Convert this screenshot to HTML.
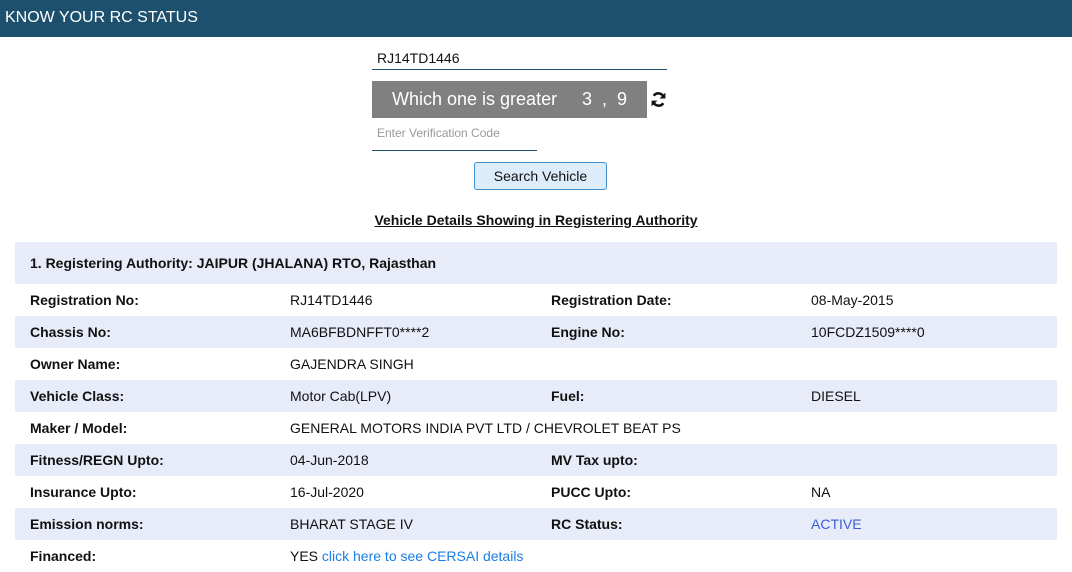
<!DOCTYPE html>
<html><head><style>
body{margin:0;width:1072px;height:571px;overflow:hidden;background:#fff;font-family:"Liberation Sans",Arial,sans-serif;color:#111;}
.hdr{position:absolute;left:0;top:0;width:1072px;height:37px;background:#1c506d;color:#fff;font-size:16px;line-height:37px;}
.hdr span{position:absolute;left:5px;top:-1px;}
.abs{position:absolute;}
.row{position:absolute;left:15px;width:1042px;height:32px;font-size:14px;line-height:32px;}
.b{background:#e8ecf8;}
.row span{position:absolute;}
.l1{left:15px;font-weight:bold;}.v1{left:275px;}.l2{left:536px;font-weight:bold;}.v2{left:796px;}
</style></head><body>
<div class="hdr"><span>KNOW YOUR RC STATUS</span></div>
<div class="abs" style="left:372px;top:48px;width:295px;height:22px;border-bottom:1px solid #1c506d;font-size:14px;padding-left:5px;box-sizing:border-box;line-height:20px;">RJ14TD1446</div>
<div class="abs" style="left:372px;top:81px;width:275px;height:37px;background:#808080;color:#fff;font-size:18px;line-height:37px;"><span style="position:absolute;left:20px;">Which one is greater</span><span style="position:absolute;left:210px;">3 &nbsp;, &nbsp;9</span></div>
<svg class="abs" style="left:650px;top:91px" width="17" height="17" viewBox="0 0 16 16"><path d="M13 6.5A5.3 5.3 0 0 0 3.5 4.5" fill="none" stroke="#111" stroke-width="2.4"/><path d="M14.5 1.5v5.5h-5.5z" fill="#111"/><path d="M3 9.5a5.3 5.3 0 0 0 9.5 2" fill="none" stroke="#111" stroke-width="2.4"/><path d="M1.5 14.5v-5.5h5.5z" fill="#111"/></svg>
<div class="abs" style="left:372px;top:122px;width:165px;height:29px;border-bottom:1px solid #1c506d;font-size:12px;color:#999;padding-left:5px;box-sizing:border-box;line-height:22px;">Enter Verification Code</div>
<div class="abs" style="left:474px;top:162px;width:131px;height:26px;border:1px solid #3d8fd0;border-radius:3px;background:#dcecfa;font-size:14px;text-align:center;line-height:26px;">Search Vehicle</div>
<div class="abs" style="left:0;width:1072px;top:212px;text-align:center;font-size:14px;font-weight:bold;text-decoration:underline;">Vehicle Details Showing in Registering Authority</div>
<div class="row b" style="top:242px;height:42px;line-height:42px;"><span class="l1">1. Registering Authority: JAIPUR (JHALANA) RTO, Rajasthan</span></div>
<div class="row" style="top:284px"><span class="l1">Registration No:</span><span class="v1">RJ14TD1446</span><span class="l2">Registration Date:</span><span class="v2">08-May-2015</span></div>
<div class="row b" style="top:316px"><span class="l1">Chassis No:</span><span class="v1">MA6BFBDNFFT0****2</span><span class="l2">Engine No:</span><span class="v2">10FCDZ1509****0</span></div>
<div class="row" style="top:348px"><span class="l1">Owner Name:</span><span class="v1">GAJENDRA SINGH</span></div>
<div class="row b" style="top:380px"><span class="l1">Vehicle Class:</span><span class="v1">Motor Cab(LPV)</span><span class="l2">Fuel:</span><span class="v2">DIESEL</span></div>
<div class="row" style="top:412px"><span class="l1">Maker / Model:</span><span class="v1">GENERAL MOTORS INDIA PVT LTD / CHEVROLET BEAT PS</span></div>
<div class="row b" style="top:444px"><span class="l1">Fitness/REGN Upto:</span><span class="v1">04-Jun-2018</span><span class="l2">MV Tax upto:</span></div>
<div class="row" style="top:476px"><span class="l1">Insurance Upto:</span><span class="v1">16-Jul-2020</span><span class="l2">PUCC Upto:</span><span class="v2">NA</span></div>
<div class="row b" style="top:508px"><span class="l1">Emission norms:</span><span class="v1">BHARAT STAGE IV</span><span class="l2">RC Status:</span><span class="v2" style="color:#3b5bdb">ACTIVE</span></div>
<div class="row" style="top:540px"><span class="l1">Financed:</span><span class="v1">YES <span style="position:static;color:#1a7ee6">click here to see CERSAI details</span></span></div>
</body></html>
